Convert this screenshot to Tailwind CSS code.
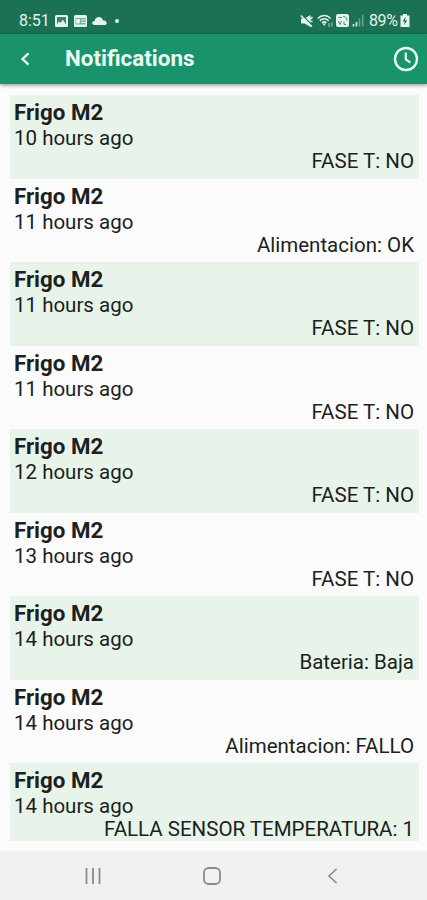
<!DOCTYPE html>
<html lang="en">
<head>
  <meta charset="UTF-8" />
  <title>Notifications</title>
  <meta name="viewport" content="width=device-width, initial-scale=1.0" />
  <script src="https://cdn.jsdelivr.net/npm/@tailwindcss/browser@4"></script>
</head>
<body class="bg-[#fbfbfb] font-[Roboto,sans-serif] text-[#1c211e] w-[427px] h-[900px] flex flex-col overflow-hidden">

  <!-- Status bar -->
  <div class="h-[34px] shrink-0 bg-[#1a7153] text-[#e4f3ec] flex items-center justify-between pl-[19px] pr-[17px] pt-[7px]">
    <div class="flex items-center">
      <span class="text-[16px] leading-none w-[30px] whitespace-nowrap">8:51</span>
      <svg class="ml-[6px]" width="13" height="12" viewBox="0 0 13 12"><rect width="13" height="12" rx="1.5" fill="currentColor"/><path d="M2 9.5V2h9v7.5L7.5 5 5.500 8 4 6.500z" fill="#1a7153" opacity=".85"/><path d="M2 10l2-3 1.500 1.500L8 5l3 5z" fill="currentColor"/></svg>
      <svg class="ml-[6px]" width="13" height="12" viewBox="0 0 13 12"><rect width="13" height="12" rx="1.5" fill="currentColor"/><path d="M1.500 3h10v6.500h-10z" fill="#1a7153" opacity=".55"/><path d="M2.500 4.500h3v3.500h-3zM7 5h4M7 7.500h4" stroke="currentColor" stroke-width="1" fill="currentColor"/></svg>
      <svg class="ml-[5px]" width="15" height="10" viewBox="0 0 15 10"><path d="M2.500 9C1 9 .3 8 .3 7c0-1.200 1-2 2.300-2C3 2.500 4.700 1 6.800 1c2 0 3.500 1.200 4 3.200 2.200 0 3.900 1.300 3.900 3 0 1-.7 1.800-1.700 1.800z" fill="currentColor"/></svg>
      <span class="ml-[8px] size-[4px] rounded-full bg-[#e4f3ec]"></span>
    </div>
    <div class="flex items-center">
      <svg width="13" height="14" viewBox="0 0 13 14"><path d="M1 4.500h3.500L10.500 1v12L4.500 9.500H1z" fill="currentColor"/><path d="M1.500.5l11 11" stroke="#1a7153" stroke-width="1.200"/><path d="M.8 1.500l11.200 11.200M10 5.500L12.500 3M10.500 7.500h2" stroke="currentColor" stroke-width="1.600"/></svg>
      <svg class="ml-[4px]" width="17" height="14" viewBox="0 0 17 14"><path d="M.8 4.500C4.500.6 10 .6 13.700 4.500M2.800 6.700c2.600-2.600 6.300-2.600 8.900 0M5 8.900c1.400-1.300 3.100-1.300 4.500 0" stroke="currentColor" stroke-width="1.500" fill="none"/><path d="M5.500 9.500h3.500L7.250 12z" fill="currentColor"/><path d="M12 9v4M15 8.500v4" stroke="currentColor" stroke-width="1.200" opacity=".6"/></svg>
      <svg class="ml-[2px]" width="13" height="13" viewBox="0 0 13 13"><rect width="13" height="13" rx="2" fill="currentColor"/><path d="M2.500 3.500h3.500M7 2.500c3 0 4 1.500 4 4M2.500 7l1.500 3.500L5.500 7M8 7.500v3h2" stroke="#1a7153" stroke-width="1" fill="none" opacity=".75"/></svg>
      <svg class="ml-[3px]" width="12" height="13" viewBox="0 0 12 13"><path d="M1.500 10v2.500M4.500 8v4.500" stroke="currentColor" stroke-width="1.800" opacity=".85"/><path d="M7.500 4.500v8M10.700 1v11.500" stroke="currentColor" stroke-width="1.600" opacity=".4"/></svg>
      <span class="ml-[5px] w-[30px] text-[16px] leading-none tracking-[-0.4px] whitespace-nowrap">89%</span>
      <svg class="ml-[1px]" width="10" height="13" viewBox="0 0 10 13"><path d="M3 0h4v1.500h2.500V13h-9V1.500H3z" fill="currentColor"/><path d="M5.500 3L2.700 7.500h2L4.200 11l3-4.500h-2z" fill="#1a7153"/></svg>
    </div>
  </div>

  <!-- App bar -->
  <header class="h-[50px] shrink-0 bg-[#19936b] text-[#eafaf3] flex items-center pl-[19px] pr-[8px] pb-[1px] shadow-[0_1px_4px_rgba(0,0,0,0.45)]">
    <svg width="12" height="14" viewBox="0 0 12 14"><path d="M9.500 1.300L3.500 7l6 5.700" fill="none" stroke="currentColor" stroke-width="2.300"/></svg>
    <h1 class="ml-[34px] text-[22.400px] font-bold leading-none">Notifications</h1>
    <svg class="ml-auto" width="26" height="26" viewBox="0 0 26 26"><circle cx="13" cy="13" r="11" fill="none" stroke="currentColor" stroke-width="2.400"/><path d="M12.800 6.500v7l4.500 3.200" fill="none" stroke="currentColor" stroke-width="2.200"/></svg>
  </header>

  <!-- List -->
  <main class="mt-[11px] ml-[10px] mr-[8px] h-[746px] shrink-0 overflow-hidden text-[20.500px]">
    <div class="h-[83.500px] bg-[#e8f4ea] pl-[4px] pr-[5px] pt-[4px]">
      <h2 class="text-[22.300px] font-bold leading-[26px]">Frigo M2</h2>
      <p class="leading-[26px]">10 hours ago</p>
      <p class="leading-[21px] text-right">FASE T: NO</p>
    </div>
    <div class="h-[83.500px] pl-[4px] pr-[5px] pt-[4px]">
      <h2 class="text-[22.300px] font-bold leading-[26px]">Frigo M2</h2>
      <p class="leading-[26px]">11 hours ago</p>
      <p class="leading-[21px] text-right">Alimentacion: OK</p>
    </div>
    <div class="h-[83.500px] bg-[#e8f4ea] pl-[4px] pr-[5px] pt-[4px]">
      <h2 class="text-[22.300px] font-bold leading-[26px]">Frigo M2</h2>
      <p class="leading-[26px]">11 hours ago</p>
      <p class="leading-[21px] text-right">FASE T: NO</p>
    </div>
    <div class="h-[83.500px] pl-[4px] pr-[5px] pt-[4px]">
      <h2 class="text-[22.300px] font-bold leading-[26px]">Frigo M2</h2>
      <p class="leading-[26px]">11 hours ago</p>
      <p class="leading-[21px] text-right">FASE T: NO</p>
    </div>
    <div class="h-[83.500px] bg-[#e8f4ea] pl-[4px] pr-[5px] pt-[4px]">
      <h2 class="text-[22.300px] font-bold leading-[26px]">Frigo M2</h2>
      <p class="leading-[26px]">12 hours ago</p>
      <p class="leading-[21px] text-right">FASE T: NO</p>
    </div>
    <div class="h-[83.500px] pl-[4px] pr-[5px] pt-[4px]">
      <h2 class="text-[22.300px] font-bold leading-[26px]">Frigo M2</h2>
      <p class="leading-[26px]">13 hours ago</p>
      <p class="leading-[21px] text-right">FASE T: NO</p>
    </div>
    <div class="h-[83.500px] bg-[#e8f4ea] pl-[4px] pr-[5px] pt-[4px]">
      <h2 class="text-[22.300px] font-bold leading-[26px]">Frigo M2</h2>
      <p class="leading-[26px]">14 hours ago</p>
      <p class="leading-[21px] text-right">Bateria: Baja</p>
    </div>
    <div class="h-[83.500px] pl-[4px] pr-[5px] pt-[4px]">
      <h2 class="text-[22.300px] font-bold leading-[26px]">Frigo M2</h2>
      <p class="leading-[26px]">14 hours ago</p>
      <p class="leading-[21px] text-right">Alimentacion: FALLO</p>
    </div>
    <div class="h-[83.500px] bg-[#e8f4ea] pl-[4px] pr-[5px] pt-[4px]">
      <h2 class="text-[22.300px] font-bold leading-[26px]">Frigo M2</h2>
      <p class="leading-[26px]">14 hours ago</p>
      <p class="leading-[21px] text-right">FALLA SENSOR TEMPERATURA: 1</p>
    </div>
  </main>

  <!-- Navigation bar -->
  <nav class="mt-auto h-[49px] shrink-0 bg-[#f0f0f0] text-[#8a8a8a] flex items-center pl-[84px]">
    <svg width="18" height="16" viewBox="0 0 18 16"><path d="M2.500 0v16M9 0v16M15.500 0v16" stroke="currentColor" stroke-width="1.800"/></svg>
    <svg class="ml-[101px]" width="18" height="18" viewBox="0 0 18 18"><rect x="1" y="1" width="16" height="16" rx="4.500" fill="none" stroke="currentColor" stroke-width="1.800"/></svg>
    <svg class="ml-[105px]" width="12" height="16" viewBox="0 0 12 16"><path d="M10.500 1L3 8l7.500 7" fill="none" stroke="currentColor" stroke-width="1.700"/></svg>
  </nav>
</body>
</html>
